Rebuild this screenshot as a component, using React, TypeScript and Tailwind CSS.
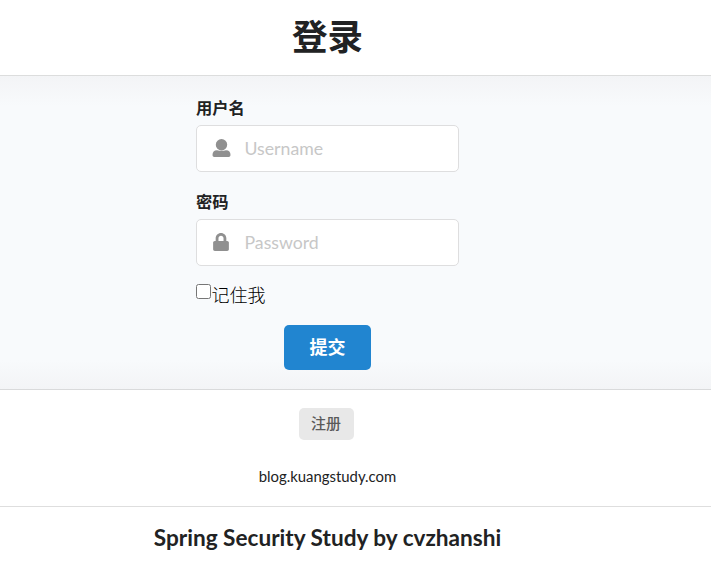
import type { ReactNode } from "react";

function Field({ label, placeholder, icon }: { label: string; placeholder: string; icon: ReactNode }) {
  return (
    <div className="mb-[18px]">
      <label className="mb-[7px] block h-[22px] pt-px text-[16.3px] leading-[22px] font-bold">{label}</label>
      <div className="flex h-[47px] items-center rounded-[5px] border border-[#dededf] bg-white pl-[15px]">
        <span className="mb-[2px] flex w-[19px] justify-center">{icon}</span>
        <input
          placeholder={placeholder}
          className="mt-px ml-[13.5px] w-[180px] bg-transparent text-[17.7px] outline-none placeholder:text-[#c7c7c7]"
        />
      </div>
    </div>
  );
}

function UserIcon() {
  return (
    <svg width="19" height="18" viewBox="0 0 19 18" fill="#909090">
      <circle cx="9.500" cy="5.800" r="5.700" />
      <path d="M5 11.200q4.500 1.200 9 0c3 0 4.500 2 4.500 4.800c0 1.200-.8 2-1.800 2H2.300C1.300 18 .5 17.200.5 16C.5 13.200 2 11.200 5 11.200Z" />
    </svg>
  );
}

function LockIcon() {
  return (
    <svg width="16" height="18" viewBox="0 0 448 512" fill="#909090" className="mr-[2px]">
      <path d="M400 224h-24v-72C376 68.2 307.8 0 224 0S72 68.2 72 152v72H48c-26.500 0-48 21.500-48 48v192c0 26.500 21.500 48 48 48h352c26.500 0 48-21.500 48-48V272c0-26.500-21.500-48-48-48zm-104 0H152v-72c0-39.700 32.300-72 72-72s72 32.300 72 72v72z" />
    </svg>
  );
}

export default function App() {
  return (
    <div className="h-[561px] overflow-hidden bg-white font-['Lato','Noto_Sans_CJK_SC',sans-serif] text-[#212223]">
      <header className="flex h-[76px] justify-center border-b border-[#dcdddd] pr-[56px]">
        <h1 className="pt-[14px] text-[35.5px] leading-[45px] font-bold">登录</h1>
      </header>
      <main className="h-[314px] border-b border-[#d9dadb] bg-[linear-gradient(#f3f4f6,#f8fafc_30px,#f8fafc_284px,#f3f4f6)] pt-[20px] pl-[196px]">
        <form className="w-[263px]">
          <Field label="用户名" placeholder="Username" icon={<UserIcon />} />
          <Field label="密码" placeholder="Password" icon={<LockIcon />} />
          <label className="flex h-5 text-[18px] leading-[22px] font-light text-black">
            <input type="checkbox" className="mr-[0.5px] h-[15px] w-[15px]" />
            记住我
          </label>
          <button type="button" className="mt-[21px] ml-[88px] block h-[45px] w-[87px] rounded-[5px] bg-[#2185d0] text-[18px] font-bold text-white">
            提交
          </button>
        </form>
      </main>
      <section className="flex h-[117px] flex-col items-center border-b border-[#dedede] pt-[18px] pr-[57px]">
        <a className="mr-[2px] flex h-8 w-[55px] items-center justify-center rounded-[5px] bg-[#e8e8e8] pb-[2px] text-[15px] font-medium text-[#5a5a5a]">注册</a>
        <p className="mt-[26px] ml-px text-[14.9px] leading-5">blog.kuangstudy.com</p>
      </section>
      <h3 className="pt-[17px] pr-[56px] text-center text-[22.6px] leading-[28px] font-bold">Spring Security Study by cvzhanshi</h3>
    </div>
  );
}
